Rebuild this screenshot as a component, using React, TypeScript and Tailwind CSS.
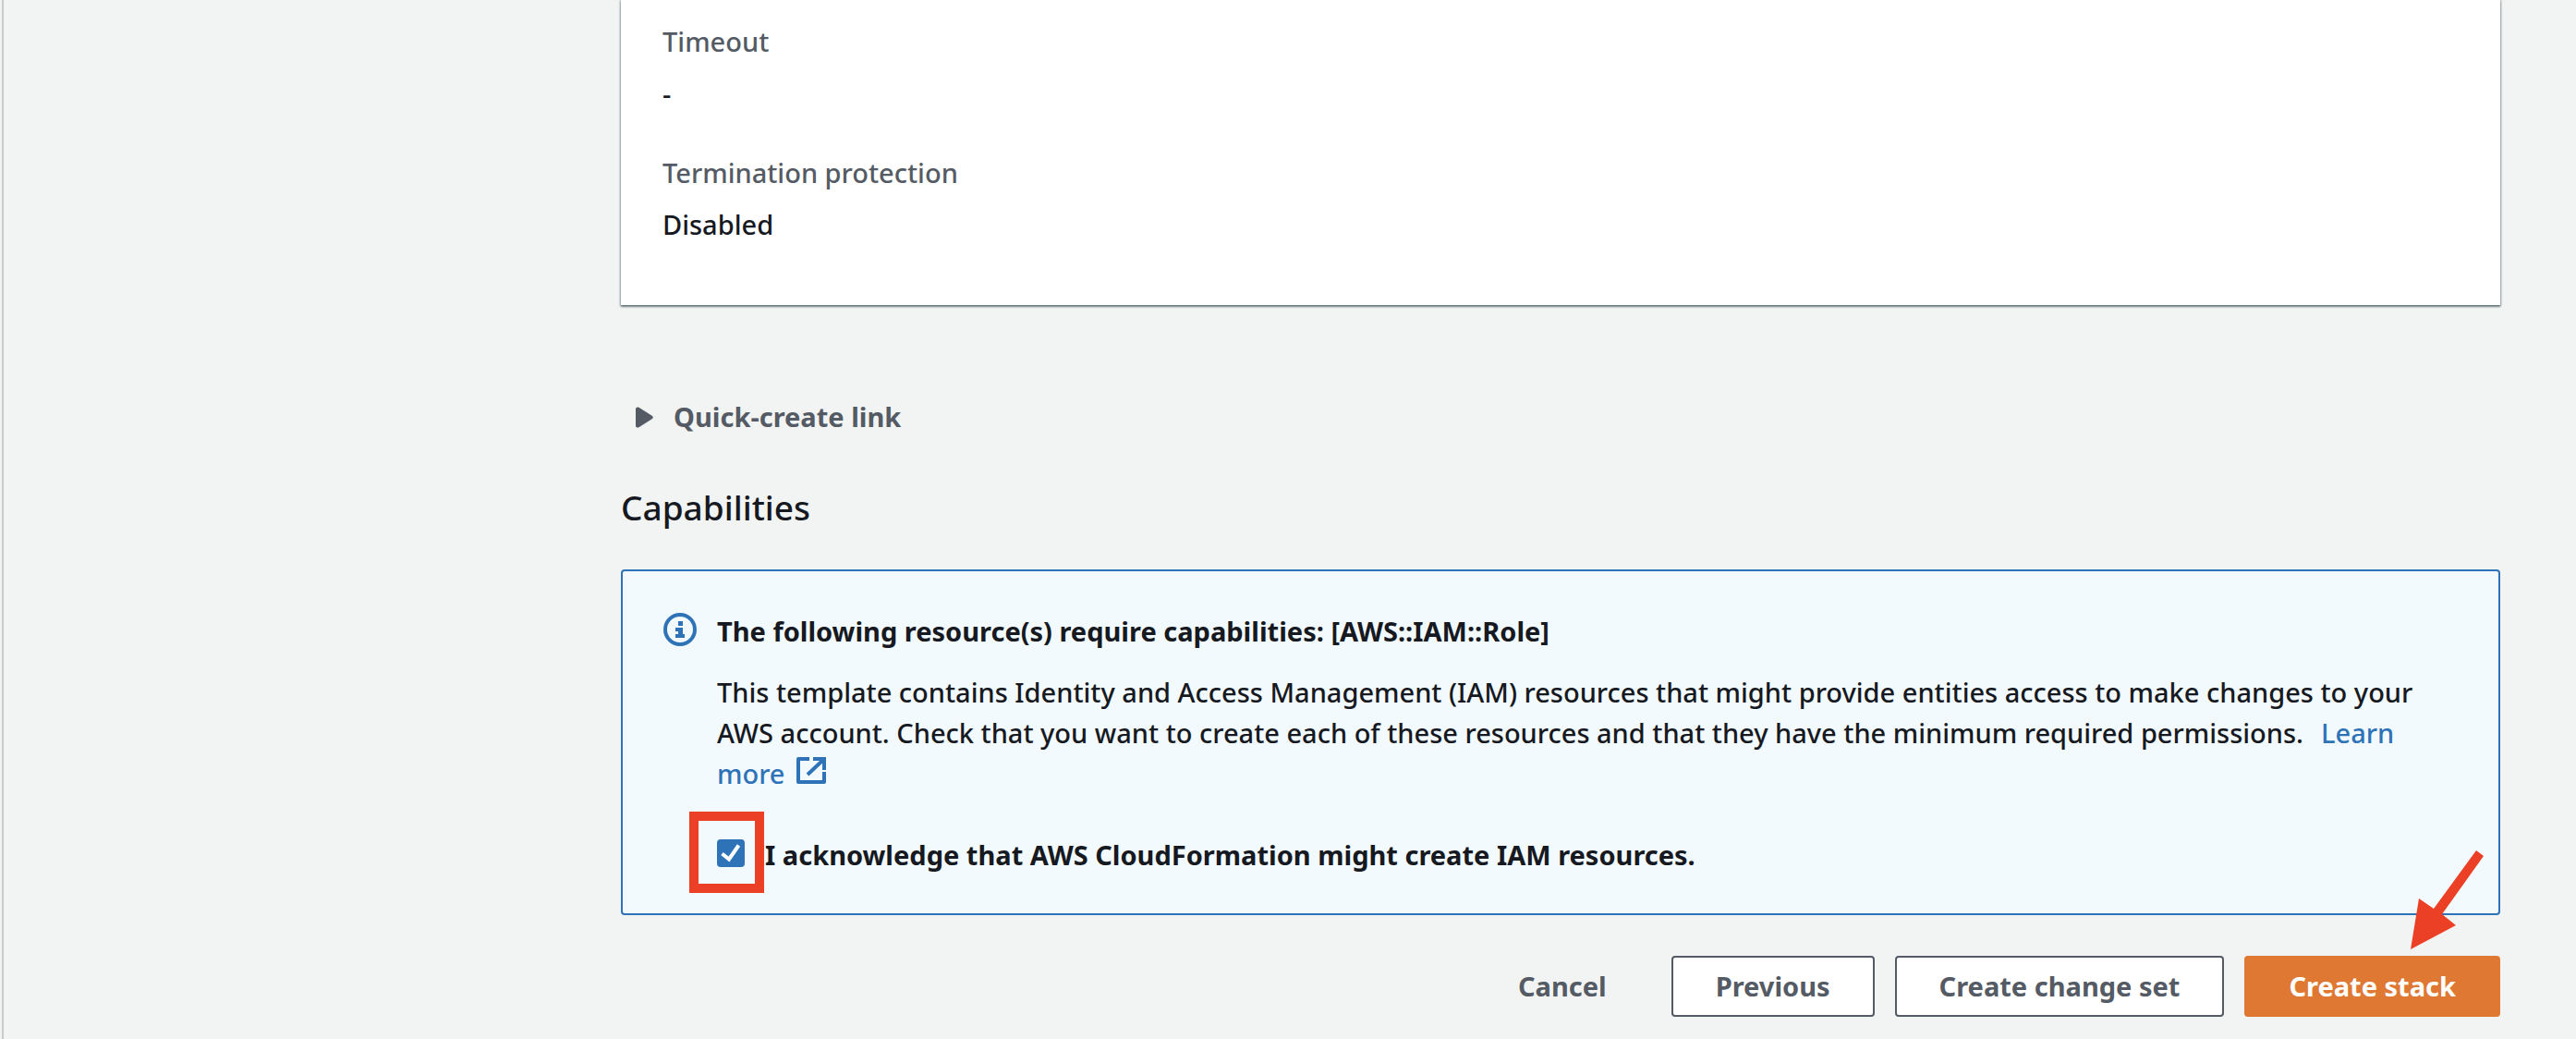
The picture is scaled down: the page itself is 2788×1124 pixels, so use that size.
import { useState, type ReactNode } from 'react'

function Field({ label, children }: { label: string; children: ReactNode }) {
  return (
    <div className="flex flex-col gap-3">
      <dt className="text-[#545b64]">{label}</dt>
      <dd>{children}</dd>
    </div>
  )
}

function InfoIcon() {
  return (
    <svg viewBox="0 0 36 36" className="mt-[2px] size-9 shrink-0" fill="none" aria-hidden="true">
      <circle cx="18" cy="18" r="16" stroke="#2e73b8" strokeWidth="4" />
      <path d="M16 9h5v5h-5zM13 16h8v7h2v4H13v-4h3v-3h-3z" fill="#2e73b8" />
    </svg>
  )
}

function ExternalIcon() {
  return (
    <svg viewBox="0 0 32 32" className="ml-3 inline-block size-8 align-[-2px]" fill="none" stroke="currentColor" strokeWidth="4" aria-hidden="true">
      <path d="M14 3H2v25h28V17" strokeLinejoin="round" />
      <path d="M18 3h12v12M29 4 12 20" />
    </svg>
  )
}

function Arrow() {
  return (
    <svg viewBox="0 0 79 107" className="pointer-events-none absolute right-[18px] bottom-full mb-[7px] h-[107px] w-[79px]" aria-hidden="true">
      <path d="M71 0 79 6 34 69 49 81 0 107 9 52 25 63Z" fill="#eb4026" />
    </svg>
  )
}

const button = 'h-[66px] cursor-pointer rounded border-2 px-[46px] font-bold'

export default function App() {
  const [checked, setChecked] = useState(true)
  return (
    <div className="flex min-h-screen bg-[#f2f4f3] pl-[2px] font-['Noto_Sans',sans-serif] text-[29px] leading-[44px] font-medium text-[#16191f]">
      <main className="flex-1 border-l-2 border-[#c8cccc] pr-[82px] pb-6 pl-[668px]">
        <section className="bg-white px-[45px] pt-[23px] pb-[65px] shadow-[0_2px_2px_0_rgba(0,28,36,0.5),0_0_2px_1px_rgba(0,28,36,0.25)]">
          <dl className="flex flex-col gap-[42px]">
            <Field label="Timeout">-</Field>
            <Field label="Termination protection">Disabled</Field>
          </dl>
        </section>

        <button type="button" aria-expanded="false" className="mt-[99px] flex cursor-pointer items-center gap-[22px] pl-4 font-bold text-[#545b64]">
          <svg viewBox="0 0 19 23" className="h-[23px] w-[19px]" fill="currentColor" aria-hidden="true">
            <path d="M0 2.5C0 .5 2 0 3.500 .8L18 10Q19.500 11.500 18 13L3.500 22.200C2 23 0 22.500 0 20.500Z" />
          </svg>
          Quick-create link
        </button>

        <h2 className="mt-12 text-[37px] leading-[56px]">Capabilities</h2>

        <section className="mt-[39px] flex gap-[22px] rounded border-2 border-[#2e73b8] bg-[#f2fafd] px-[44px] pt-[43px] pb-[41px]">
          <InfoIcon />
          <div className="min-w-0 flex-1">
            <h3 className="font-bold">The following resource(s) require capabilities: [AWS::IAM::Role]</h3>
            <p className="mt-[22px]">
              This template contains Identity and Access Management (IAM) resources that might provide entities access to
              make changes to your AWS account. Check that you want to create each of these resources and that they have
              the minimum required permissions.{'\u00a0 '}
              <a href="#learn-more" className="ml-1 text-[#2e73b8]">
                Learn more
                <ExternalIcon />
              </a>
            </p>
            <label className="mt-11 flex cursor-pointer items-start gap-[22px] font-bold">
              <span className="relative mt-[5px] size-[30px] shrink-0">
                <input
                  type="checkbox"
                  checked={checked}
                  onChange={(e) => setChecked(e.target.checked)}
                  className="peer block size-[30px] appearance-none rounded border-2 border-[#2e73b8] bg-white checked:bg-[#2e73b8]"
                />
                <svg viewBox="0 0 30 30" className="pointer-events-none absolute inset-0 hidden size-[30px] peer-checked:block" fill="none" aria-hidden="true">
                  <path d="M5.500 15.500 13 21.500 23.500 6.500" stroke="#fff" strokeWidth="4" />
                </svg>
                <span className="pointer-events-none absolute -top-[30px] -left-[30px] h-[88px] w-[81px] border-[10px] border-[#eb4026]" />
              </span>
              I acknowledge that AWS CloudFormation might create IAM resources.
            </label>
          </div>
        </section>

        <div className="mt-11 flex justify-end gap-[22px] whitespace-nowrap text-[#545b64]">
          <button type="button" className={`${button} border-transparent`}>Cancel</button>
          <button type="button" className={`${button} border-[#545b64] bg-white`}>Previous</button>
          <button type="button" className={`${button} border-[#545b64] bg-white`}>Create change set</button>
          <div className="relative">
            <button type="button" className={`${button} border-[#df7832] bg-[#df7832] text-white`}>Create stack</button>
            <Arrow />
          </div>
        </div>
      </main>
    </div>
  )
}
